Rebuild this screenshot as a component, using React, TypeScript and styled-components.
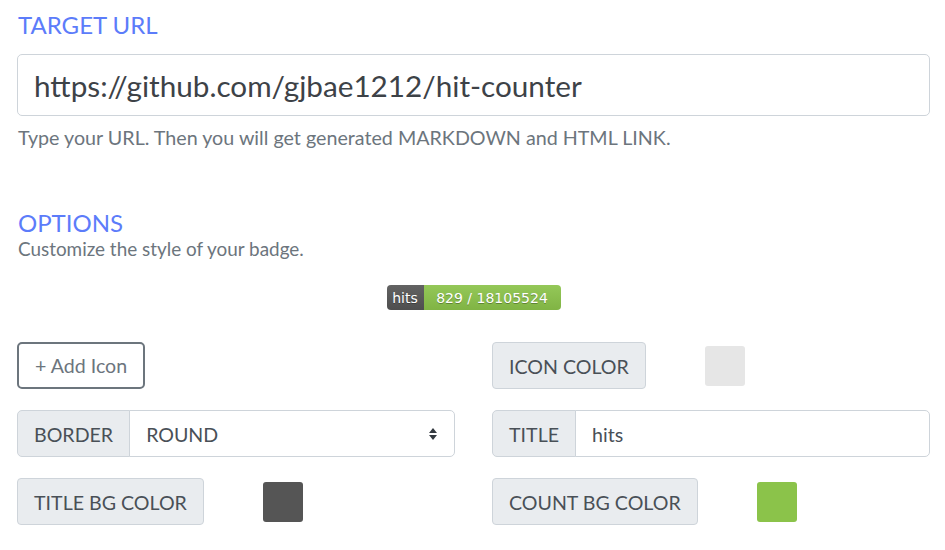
import React from "react";
import styled, { createGlobalStyle } from "styled-components";

const GlobalStyle = createGlobalStyle`
  body {
    margin: 0;
    background: #fff;
    font-family: Lato, "Noto Sans", sans-serif;
    color: #495057;
  }
`;

const Page = styled.div`
  padding: 10px 15px 0 17px;
`;

const Heading = styled.h2<{ $top?: number }>`
  margin: ${(p) => p.$top ?? 0}px 0 0 1px;
  font-size: 24px;
  font-weight: 400;
  line-height: 1.25;
  color: #5c7cfa;
`;

const UrlInput = styled.input`
  display: block;
  box-sizing: border-box;
  width: 100%;
  height: 62px;
  margin-top: 14px;
  padding: 0 16px;
  border: 1px solid #ced4da;
  border-radius: 5px;
  font-family: inherit;
  font-size: 29.7px;
  color: #3d4247;
  outline: none;
`;

const Help = styled.p<{ $size: number; $top: number }>`
  margin: ${(p) => p.$top}px 0 0 1px;
  font-size: ${(p) => p.$size}px;
  line-height: 1.4;
  color: #6c757d;
`;

const BadgeRow = styled.div`
  display: flex;
  justify-content: center;
  margin-top: 23px;
`;

const Badge = styled.div`
  display: flex;
  height: 25px;
  border-radius: 4px;
  overflow: hidden;
  font-family: "DejaVu Sans", Verdana, sans-serif;
  font-size: 14px;
  color: #fff;
  text-shadow: 0 1px 0 rgba(1, 1, 1, 0.3);
`;

const BadgePart = styled.span<{ $bg: string; $w: number }>`
  display: flex;
  align-items: center;
  justify-content: center;
  width: ${(p) => p.$w}px;
  background: linear-gradient(rgba(255, 255, 255, 0.08), rgba(0, 0, 0, 0.08)),
    ${(p) => p.$bg};
`;

const Grid = styled.div`
  display: grid;
  grid-template-columns: 1fr 1fr;
  column-gap: 37px;
  row-gap: 21px;
  margin-top: 32px;
`;

const Cell = styled.div`
  display: flex;
  align-items: center;
  height: 47px;
`;

const OutlineButton = styled.button`
  box-sizing: border-box;
  height: 47px;
  padding: 0 16px;
  border: 2px solid #6c757d;
  border-radius: 5px;
  background: #fff;
  font-family: inherit;
  font-size: 19.6px;
  color: #6c757d;
`;

const Label = styled.span<{ $joined?: boolean }>`
  box-sizing: border-box;
  display: flex;
  align-items: center;
  height: 47px;
  padding: 1px 16px 0;
  border: 1px solid #ced4da;
  border-radius: ${(p) => (p.$joined ? "5px 0 0 5px" : "4px")};
  background: #e9ecef;
  font-size: 19.6px;
  color: #495057;
  white-space: nowrap;
`;

const Swatch = styled.span<{ $color: string }>`
  width: 40px;
  height: 40px;
  margin-left: 59px;
  border-radius: 3px;
  background: ${(p) => p.$color};
`;

const Field = styled.div`
  box-sizing: border-box;
  flex: 1;
  display: flex;
  align-items: center;
  justify-content: space-between;
  height: 47px;
  margin-left: -1px;
  padding: 1px 16px 0;
  border: 1px solid #ced4da;
  border-radius: 0 5px 5px 0;
  background: #fff;
  font-size: 19.6px;
  color: #495057;
`;

const Arrows = () => (
  <svg width="10" height="14" viewBox="0 0 10 14">
    <path d="M5 1 L9 6 H1 Z M5 13 L9 8 H1 Z" fill="#343a40" />
  </svg>
);

export default function App() {
  return (
    <Page>
      <GlobalStyle />
      <Heading>TARGET URL</Heading>
      <UrlInput defaultValue="https://github.com/gjbae1212/hit-counter" />
      <Help $size={19.7} $top={8}>
        Type your URL. Then you will get generated MARKDOWN and HTML LINK.
      </Help>

      <Heading $top={56}>OPTIONS</Heading>
      <Help $size={18.9} $top={-2}>
        Customize the style of your badge.
      </Help>

      <BadgeRow>
        <Badge>
          <BadgePart $bg="#555" $w={37}>hits</BadgePart>
          <BadgePart $bg="#8bc34a" $w={137}>829 / 18105524</BadgePart>
        </Badge>
      </BadgeRow>

      <Grid>
        <Cell>
          <OutlineButton>+ Add Icon</OutlineButton>
        </Cell>
        <Cell>
          <Label>ICON COLOR</Label>
          <Swatch $color="#e6e6e6" />
        </Cell>
        <Cell>
          <Label $joined>BORDER</Label>
          <Field>
            ROUND
            <Arrows />
          </Field>
        </Cell>
        <Cell>
          <Label $joined>TITLE</Label>
          <Field>hits</Field>
        </Cell>
        <Cell>
          <Label>TITLE BG COLOR</Label>
          <Swatch $color="#555555" />
        </Cell>
        <Cell>
          <Label>COUNT BG COLOR</Label>
          <Swatch $color="#8bc34a" />
        </Cell>
      </Grid>
    </Page>
  );
}
